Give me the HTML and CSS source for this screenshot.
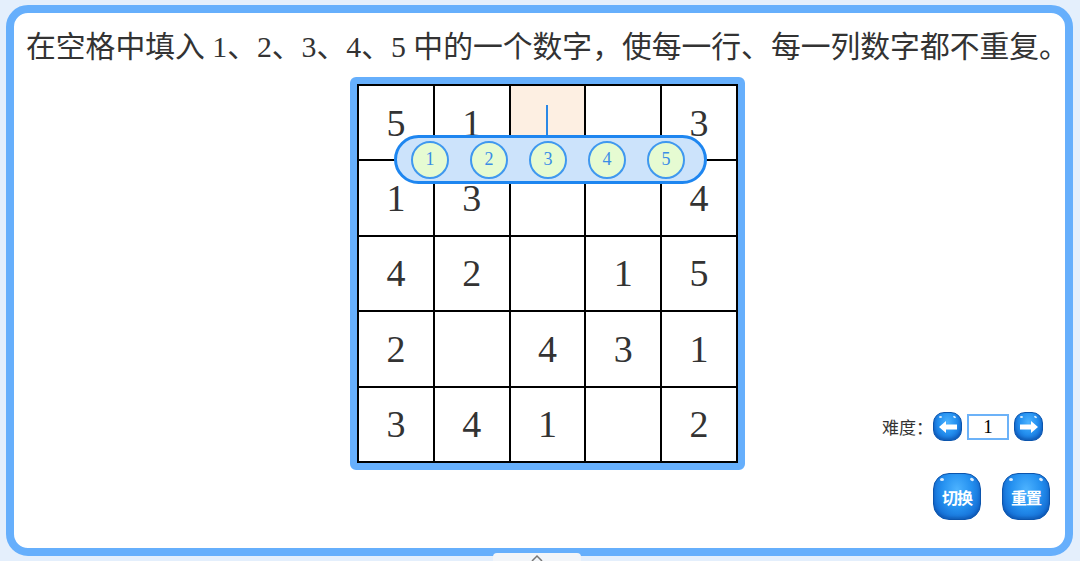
FILE: index.html
```html
<!DOCTYPE html>
<html lang="zh">
<head>
<meta charset="utf-8">
<title>数独</title>
<link rel="stylesheet" href="styles.css">
</head>
<body>
<div class="panel">
  <h1 class="title">在空格中填入 1、2、3、4、5 中的一个数字，使每一行、每一列数字都不重复。</h1>
  <div class="stage">
    <div class="board">
      <div class="grid">
        <div class="cell">5</div><div class="cell">1</div><div class="cell active"><span class="caret"></span></div><div class="cell"></div><div class="cell">3</div>
        <div class="cell">1</div><div class="cell">3</div><div class="cell"></div><div class="cell"></div><div class="cell">4</div>
        <div class="cell">4</div><div class="cell">2</div><div class="cell"></div><div class="cell">1</div><div class="cell">5</div>
        <div class="cell">2</div><div class="cell"></div><div class="cell">4</div><div class="cell">3</div><div class="cell">1</div>
        <div class="cell">3</div><div class="cell">4</div><div class="cell">1</div><div class="cell"></div><div class="cell">2</div>
      </div>
      <div class="picker">
        <span class="opt">1</span><span class="opt">2</span><span class="opt">3</span><span class="opt">4</span><span class="opt">5</span>
      </div>
    </div>
    <div class="controls">
      <div class="level">
        <span class="level-label">难度：</span>
        <span class="gbtn arrow"><svg viewBox="0 0 20 14" width="20" height="14"><path d="M1 7 L8 1 L8 4.5 L19 4.5 L19 9.5 L8 9.5 L8 13 Z" fill="#fff"/></svg></span>
        <span class="level-box">1</span>
        <span class="gbtn arrow"><svg viewBox="0 0 20 14" width="20" height="14"><path d="M19 7 L12 1 L12 4.5 L1 4.5 L1 9.5 L12 9.5 L12 13 Z" fill="#fff"/></svg></span>
      </div>
      <div class="actions">
        <span class="gbtn big">切换</span>
        <span class="gbtn big">重置</span>
      </div>
    </div>
  </div>
</div>
<div class="tab"><svg viewBox="0 0 12 8" width="12" height="8"><path d="M1 7 L6 2 L11 7" fill="none" stroke="#777" stroke-width="1.5"/></svg></div>
</body>
</html>
```

FILE: styles.css
```css
html, body {
  margin: 0;
  padding: 0;
}
body {
  width: 1080px;
  height: 561px;
  overflow: hidden;
  background: #e4effc;
  position: relative;
  font-family: "Liberation Serif", "Noto Sans CJK SC", serif;
}
.panel {
  margin: 5px 0 0 6px;
  width: 1051px;
  height: 535px;
  border: 8px solid #66affc;
  border-radius: 22px;
  background: #fff;
  box-sizing: content-box;
}
.title {
  margin: 0;
  padding: 14px 0 0 12px;
  font-weight: normal;
  font-size: 29.8px;
  line-height: 40px;
  color: #333;
  white-space: nowrap;
}
.stage {
  display: flex;
  margin-top: 10px;
}
.board {
  position: relative;
  margin-left: 336px;
  border: 7px solid #66affc;
  border-radius: 6px;
  width: 381px;
  height: 379px;
}
.grid {
  display: grid;
  grid-template-columns: repeat(5, 1fr);
  grid-template-rows: repeat(5, 1fr);
  gap: 2px;
  padding: 2px;
  box-sizing: border-box;
  width: 100%;
  height: 100%;
  background: #000;
}
.cell {
  position: relative;
  background: #fff;
  display: flex;
  align-items: center;
  justify-content: center;
  font-family: "Liberation Serif", serif;
  font-size: 38px;
  color: #333;
}
.cell.active {
  background: #fdefe2;
}
.caret {
  position: absolute;
  left: 50%;
  top: 19px;
  width: 2px;
  height: 36px;
  margin-left: -1px;
  background: #2a88e6;
}
.picker {
  position: absolute;
  left: 37px;
  top: 51px;
  width: 313px;
  height: 49px;
  box-sizing: border-box;
  border: 3px solid #1e86f0;
  border-radius: 25px;
  background: #cce3fb;
  display: flex;
  align-items: center;
  justify-content: flex-start;
  padding-left: 14px;
  gap: 21px;
}
.opt {
  width: 38px;
  height: 38px;
  flex: none;
  box-sizing: border-box;
  border: 2px solid #3f98ef;
  border-radius: 50%;
  background: #e6fbd2;
  display: flex;
  align-items: center;
  justify-content: center;
  font-family: "Liberation Serif", serif;
  font-size: 18px;
  color: #3a8de6;
}
.controls {
  margin-left: auto;
  margin-right: 15px;
  padding-top: 335px;
  display: flex;
  flex-direction: column;
  align-items: flex-end;
}
.level {
  display: flex;
  align-items: center;
  margin-right: 7px;
  height: 29px;
}
.level-label {
  font-family: "Noto Sans CJK SC", sans-serif;
  font-size: 17px;
  color: #333;
  margin-right: 0;
  letter-spacing: 0;
}
.level-box {
  width: 42px;
  height: 26px;
  box-sizing: border-box;
  border: 2px solid #6cb2f8;
  margin: 0 5px;
  display: flex;
  align-items: center;
  justify-content: center;
  font-family: "Liberation Serif", serif;
  font-size: 19px;
  color: #000;
  background: #fff;
}
.gbtn {
  position: relative;
  display: flex;
  align-items: center;
  justify-content: center;
  box-sizing: border-box;
  border: 1px solid #0c55ad;
  background: radial-gradient(ellipse at 50% 35%, #4db3ff 0%, #2591f0 45%, #136cd3 80%, #0c56b0 100%);
  box-shadow: inset 0 -2px 3px rgba(0, 30, 90, 0.25);
  color: #fff;
}
.gbtn::before,
.gbtn::after {
  content: "";
  position: absolute;
  top: 4px;
  width: 4px;
  height: 3px;
  border-radius: 50%;
  background: rgba(255, 255, 255, 0.85);
}
.gbtn::before {
  left: 6px;
}
.gbtn::after {
  right: 6px;
  transform: rotate(30deg);
}
.arrow {
  width: 29px;
  height: 29px;
  border-radius: 11px;
}
.arrow::before,
.arrow::after {
  top: 3px;
  width: 3px;
  height: 2px;
}
.arrow::before { left: 5px; }
.arrow::after { right: 5px; }
.actions {
  display: flex;
  gap: 21px;
  margin-top: 32px;
}
.big {
  width: 48px;
  height: 47px;
  border-radius: 16px;
  font-family: "Noto Sans CJK SC", sans-serif;
  font-size: 16px;
  font-weight: bold;
  letter-spacing: -1px;
}
.tab {
  position: absolute;
  left: 493px;
  top: 553px;
  width: 88px;
  height: 12px;
  background: #f2f5f9;
  border-radius: 4px 4px 0 0;
  display: flex;
  justify-content: center;
  padding-top: 1px;
  box-sizing: border-box;
}
```
